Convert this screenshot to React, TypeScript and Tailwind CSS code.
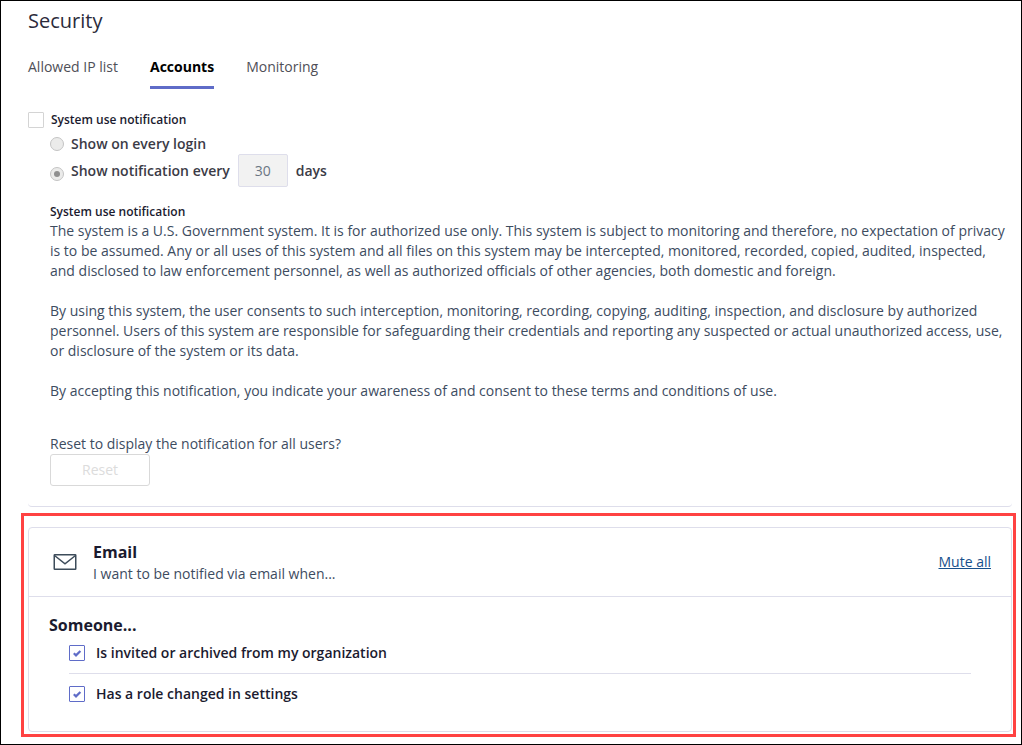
/**
 * Security settings page, Accounts tab
 *
 * Shows the system use notification settings and the email
 * notification card.
 */

import React, { useState } from 'react';

interface NotificationOption {
  id: string;
  label: string;
}

const tabs = ['Allowed IP list', 'Accounts', 'Monitoring'];

const emailOptions: NotificationOption[] = [
  { id: 'invited', label: 'Is invited or archived from my organization' },
  { id: 'role', label: 'Has a role changed in settings' }
];

const radioClass =
  "grid size-[14px] shrink-0 appearance-none place-items-center rounded-full border border-[#c4c4c4] bg-[#ebebea] before:size-[6px] before:rounded-full before:content-[''] checked:before:bg-[#8f8f8f]";

// Envelope outline next to the Email title
const MailIcon: React.FC = () => (
  <svg className="h-4 w-6 shrink-0" viewBox="0 0 24 16" fill="none" stroke="#3d4c5a" strokeWidth="1.5">
    <rect x="1.25" y="0.75" width="21.5" height="14.5" rx="0.5" />
    <path d="M1.5 1.5 L12 9.8 L22.5 1.5" />
  </svg>
);

/**
 * NotificationCheckbox component
 * Tick box with its label, tick drawn over the native input
 */
const NotificationCheckbox: React.FC<{ option: NotificationOption }> = ({ option }) => {
  const [checked, setChecked] = useState(true);

  return (
    <div className="flex items-center py-[10px]">
      <span className="relative flex size-4 shrink-0">
        <input
          type="checkbox"
          id={option.id}
          className="size-4 appearance-none rounded-[1px] border border-[#5f6cc8] bg-white"
          checked={checked}
          onChange={(e) => setChecked(e.target.checked)}
        />
        {checked && (
          <svg className="pointer-events-none absolute inset-0" viewBox="0 0 16 16" fill="none">
            <path d="M4.8 8.3 L7 10.4 L11.4 6" stroke="#5f6cc8" strokeWidth="2.2" />
          </svg>
        )}
      </span>
      <label htmlFor={option.id} className="pl-[11px] font-semibold text-[#1b1b2f]">
        {option.label}
      </label>
    </div>
  );
};

/**
 * SystemUse component
 * Login notification settings with the notification text
 */
const SystemUse: React.FC = () => {
  const [enabled, setEnabled] = useState(false);
  const [frequency, setFrequency] = useState('interval');

  return (
    <section className="mr-[9px] ml-[27px] rounded-b border-b border-[#dedeeb] pb-5">
      <div className="flex items-center">
        <input
          type="checkbox"
          id="system-use"
          className="size-4 appearance-none rounded-[1px] border border-[#d4d4d4] bg-white checked:bg-[#5f6cc8]"
          checked={enabled}
          onChange={(e) => setEnabled(e.target.checked)}
        />
        <label htmlFor="system-use" className="pl-[7px] text-[12px] leading-5 font-semibold text-[#1b1b2f]">
          System use notification
        </label>
      </div>

      <div className="pl-[22px]">
        <div className="flex items-center pt-1 font-semibold text-[#3b3b46]">
          <input
            type="radio"
            name="frequency"
            id="every-login"
            className={radioClass}
            checked={frequency === 'login'}
            onChange={() => setFrequency('login')}
          />
          <label htmlFor="every-login" className="pl-[7px]">Show on every login</label>
        </div>
        <div className="flex items-center font-semibold text-[#3b3b46]">
          <input
            type="radio"
            name="frequency"
            id="every-interval"
            className={`${radioClass} mb-1.5 self-end`}
            checked={frequency === 'interval'}
            onChange={() => setFrequency('interval')}
          />
          <label htmlFor="every-interval" className="pl-[7px]">Show notification every</label>
          <input
            type="text"
            aria-label="Days between notifications"
            className="mx-2 h-[33px] w-[50px] rounded-[2px] border border-[#dedeeb] bg-[#f2f2f2] text-center font-normal text-[#6b7684]"
            defaultValue="30"
            disabled
          />
          <span>days</span>
        </div>

        <h2 className="pt-4 text-[12px] leading-[18px] font-semibold text-[#1b1b2f]">System use notification</h2>
      </div>

      <div className="space-y-5 pl-[22px]">
        <p>
          The system is a U.S. Government system. It is for authorized use only. This system is subject to monitoring
          and therefore, no expectation of privacy is to be assumed. Any or all uses of this system and all files on
          this system may be intercepted, monitored, recorded, copied, audited, inspected, and disclosed to law
          enforcement personnel, as well as authorized officials of other agencies, both domestic and foreign.
        </p>
        <p>
          By using this system, the user consents to such interception, monitoring, recording, copying, auditing,
          inspection, and disclosure by authorized personnel. Users of this system are responsible for safeguarding
          their credentials and reporting any suspected or actual unauthorized access, use, or disclosure of the
          system or its data.
        </p>
        <p>
          By accepting this notification, you indicate your awareness of and consent to these terms and conditions of
          use.
        </p>
      </div>

      <div className="pt-[33px] pl-[22px]">
        <p>Reset to display the notification for all users?</p>
        <button type="button" disabled className="h-8 w-[100px] rounded-[3px] border border-[#d9d9d9] bg-white text-[#dcdcdc]">
          Reset
        </button>
      </div>
    </section>
  );
};

/**
 * EmailCard component
 * Email notification options inside the highlighted frame
 */
const EmailCard: React.FC = () => (
  <section className="mt-[6px] mr-[5px] ml-5 border-3 border-[#ff4242] pt-[11px] pr-px pb-[2px] pl-1">
    <div className="rounded border border-[#dedeeb]">
      <div className="flex items-center border-b border-[#dedeeb] py-3 pr-5 pl-6">
        <MailIcon />
        <div className="flex-1 pl-4">
          <h2 className="text-[16px] leading-6 font-bold text-[#1b1b2f]">Email</h2>
          <p className="leading-5">I want to be notified via email when...</p>
        </div>
        <a href="#mute" className="text-[#17508c] underline">Mute all</a>
      </div>

      <div className="pt-4 pr-10 pb-[17px] pl-5">
        <h3 className="text-[16px] leading-6 font-bold text-[#1b1b2f]">Someone...</h3>
        <div className="-mt-1 divide-y divide-[#dedeeb] pl-5">
          {emailOptions.map((option) => (
            <NotificationCheckbox key={option.id} option={option} />
          ))}
        </div>
      </div>
    </div>
  </section>
);

const App: React.FC = () => {
  const [activeTab, setActiveTab] = useState('Accounts');

  return (
    <main className="min-h-screen border border-black bg-white font-['Open_Sans',sans-serif] text-[14px] leading-5 text-[#3d4c5f]">
      <h1 className="pt-[6px] pl-[27px] text-[20px] leading-7 text-[#2b2b3b]">Security</h1>

      {/* Tabs */}
      <nav className="flex gap-8 pt-[22px] pb-[21px] pl-[27px]">
        {tabs.map((tab) => (
          <button
            key={tab}
            type="button"
            onClick={() => setActiveTab(tab)}
            className={
              tab === activeTab
                ? 'border-b-3 border-[#5f6cc8] pb-[9px] font-bold text-black'
                : 'border-b-3 border-transparent pb-[9px] text-[#4f4f57]'
            }
          >
            {tab}
          </button>
        ))}
      </nav>

      <SystemUse />
      <EmailCard />
    </main>
  );
};

export default App;
